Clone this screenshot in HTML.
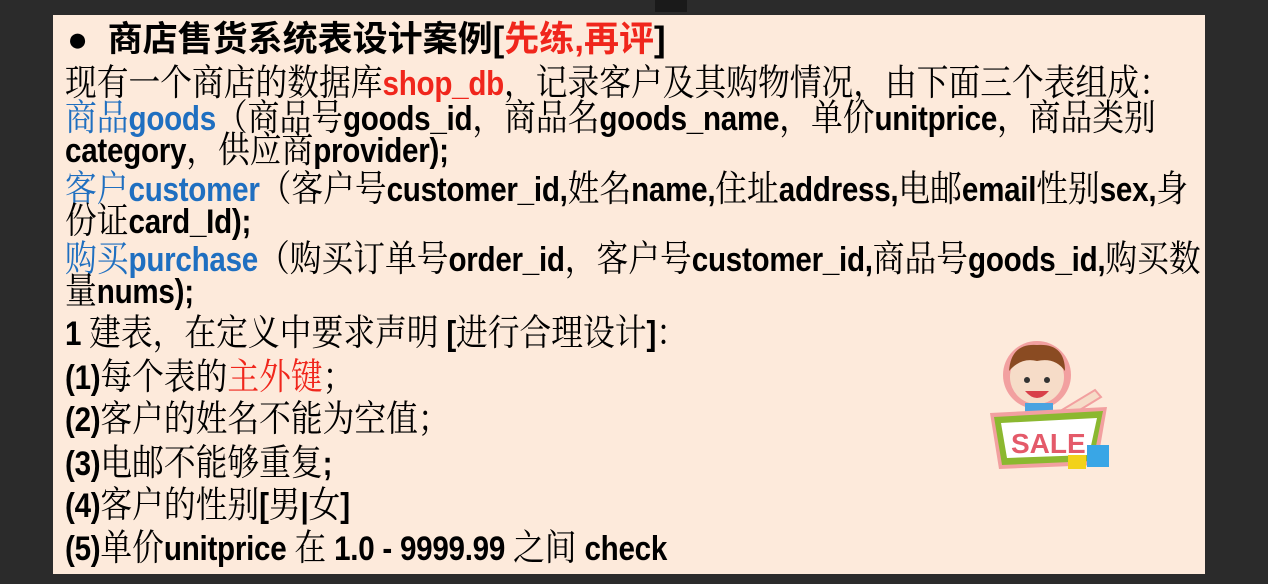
<!DOCTYPE html>
<html><head><meta charset="utf-8"><style>
html,body{margin:0;padding:0}
body{width:1268px;height:584px;background:#2b2b2b;position:relative;overflow:hidden;font-family:"Liberation Sans","Noto Sans CJK SC",sans-serif}
.panel{position:absolute;left:53px;top:15px;width:1152px;height:559px;background:#fdeadb}
.l{position:absolute;left:65px;white-space:nowrap;font-size:34px;line-height:34px;color:#000;font-weight:bold;letter-spacing:-0.3px;transform:scaleX(0.87);transform-origin:0 0}
.c{font-family:"Noto Serif CJK SC","Noto Sans CJK SC",serif;font-weight:normal;font-size:36.5px;letter-spacing:0}
.b{color:#1f6fc0}
.r{color:#f0261c}
</style></head><body>
<div class="panel"></div>
<div style="position:absolute;left:655px;top:0;width:32px;height:12px;background:#1a1a1a"></div>
<div class="l" style="top:21px;font-size:35px;line-height:38px;left:67px;letter-spacing:0;transform:none">●&nbsp; 商店售货系统表设计案例[<span class="r">先练,再评</span>]</div>
<div class="l" style="top:63px"><span class="c">现有一个商店的数据库</span><span class="r">shop_db</span><span class="c">，记录客户及其购物情况，由下面三个表组成：</span></div>
<div class="l" style="top:98px"><span class="c b">商品</span><span class="b">goods</span><span class="c">（商品号</span>goods_id<span class="c">，商品名</span>goods_name<span class="c">，单价</span>unitprice<span class="c">，商品类别</span></div>
<div class="l" style="top:130px">category<span class="c">，供应商</span>provider);</div>
<div class="l" style="top:169px"><span class="c b">客户</span><span class="b">customer</span><span class="c">（客户号</span>customer_id,<span class="c">姓名</span>name,<span class="c">住址</span>address,<span class="c">电邮</span>email<span class="c">性别</span>sex,<span class="c">身</span></div>
<div class="l" style="top:201px"><span class="c">份证</span>card_Id);</div>
<div class="l" style="top:239px"><span class="c b">购买</span><span class="b">purchase</span><span class="c">（购买订单号</span>order_id<span class="c">，客户号</span>customer_id,<span class="c">商品号</span>goods_id,<span class="c">购买数</span></div>
<div class="l" style="top:271px"><span class="c">量</span>nums);</div>
<div class="l" style="top:313px">1 <span class="c">建表，在定义中要求声明</span> [<span class="c">进行合理设计</span>]<span class="c">：</span></div>
<div class="l" style="top:357px">(1)<span class="c">每个表的</span><span class="c r">主外键</span><span class="c">；</span></div>
<div class="l" style="top:399px">(2)<span class="c">客户的姓名不能为空值；</span></div>
<div class="l" style="top:443px">(3)<span class="c">电邮不能够重复</span>;</div>
<div class="l" style="top:485px">(4)<span class="c">客户的性别</span>[<span class="c">男</span>|<span class="c">女</span>]</div>
<div class="l" style="top:528px">(5)<span class="c">单价</span>unitprice <span class="c">在</span> 1.0 - 9999.99 <span class="c">之间</span> check</div>
<svg style="position:absolute;left:985px;top:335px" width="136" height="145" viewBox="0 0 136 145">
<circle cx="52" cy="40" r="34" fill="#f2a0a0"/>
<circle cx="52" cy="42" r="27" fill="#f6dcc8"/>
<path d="M24 36 Q26 8 52 10 Q80 8 80 36 Q70 22 52 26 Q36 22 24 36Z" fill="#8a4b22"/>
<circle cx="42" cy="45" r="3" fill="#333"/><circle cx="62" cy="45" r="3" fill="#333"/>
<path d="M40 56 Q52 70 64 56Z" fill="#d8404a"/>
<rect x="40" y="68" width="28" height="12" fill="#4aa3e0"/>
<path d="M72 78 L110 55 L116 62 L80 84Z" fill="#f6dcc8" stroke="#f2a0a0" stroke-width="2"/>
<path d="M5 78 L122 72 L112 130 L14 134Z" fill="#f2a0a0"/>
<path d="M9 82 L118 76 L108 126 L17 130Z" fill="#8bb830"/>
<path d="M16 88 L112 83 L104 120 L22 123Z" fill="#fff"/>
<text x="26" y="118" font-family="Liberation Sans" font-weight="bold" font-size="28" fill="#e45a6a">SALE</text>
<rect x="102" y="110" width="22" height="22" fill="#39a6e6"/>
<rect x="83" y="120" width="18" height="14" fill="#f2d21a"/>
</svg>
</body></html>
